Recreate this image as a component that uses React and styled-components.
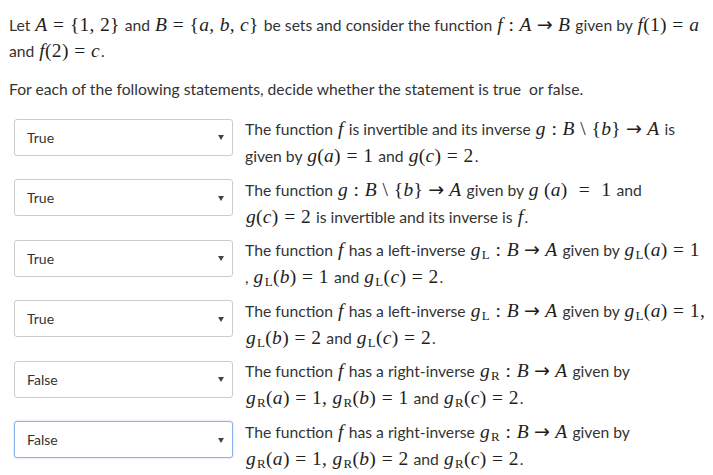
import React from 'react'
import styled, { createGlobalStyle } from 'styled-components'

const GlobalStyle = createGlobalStyle`
  body {
    margin: 0;
    background: #fff;
    color: #333;
    font-family: Lato, "Open Sans", sans-serif;
    font-size: 15.7px;
  }
`

const Page = styled.div`
  padding: 12px 6px 0 9px;
`

const Intro = styled.p`
  margin: 0;
  line-height: 26px;
`

const Lead = styled.p`
  margin: 15px 0 17px 0;
  line-height: 20px;
`

const List = styled.div`
  display: flex;
  flex-direction: column;
  gap: 6.5px;
  padding-left: 5px;
`

const Row = styled.div`
  display: grid;
  grid-template-columns: 219px 1fr;
  column-gap: 12px;
  align-items: start;
`

const Select = styled.div`
  box-sizing: border-box;
  height: 37px;
  margin-top: 2.5px;
  display: flex;
  align-items: center;
  justify-content: space-between;
  padding: 0 8px 0 12px;
  border: 1px solid ${({ $focused }) => ($focused ? '#8cb4ec' : '#ccc')};
  box-shadow: ${({ $focused }) => ($focused ? '0 0 2px rgba(102,150,233,0.5)' : 'none')};
  border-radius: 3px;
  background: #fff;
  font-size: 14px;
  color: #333;
`

const Caret = styled.span`
  width: 0;
  height: 0;
  border-left: 3px solid transparent;
  border-right: 3px solid transparent;
  border-top: 5px solid #444;
  margin-top: 1px;
`

const Statement = styled.div`
  line-height: 27px;
  white-space: nowrap;
`

const M = styled.span`
  font-family: "Liberation Serif", "DejaVu Serif", serif;
  font-size: 19.5px;
  line-height: 1;
  letter-spacing: 0.3px;
  white-space: nowrap;
  margin: 0 1px;
  color: #1e1e1e;
`

const V = styled.i`
  font-style: italic;
`

const Op = styled.span`
  margin: 0 ${({ $w }) => $w || 5.5}px;
`

const Arrow = styled.span`
  font-family: "DejaVu Sans", sans-serif;
  font-size: 19px;
  line-height: 0;
  margin: 0 5px;
`

const Sub = styled.span`
  font-size: 13px;
  line-height: 0;
  vertical-align: -3px;
  font-style: normal;
  margin-left: 1px;
`

const gL = <><V>g</V><Sub>L</Sub></>
const gR = <><V>g</V><Sub>R</Sub></>
const setMinusB = <><V>B</V><Op>\</Op>{'{'}<V>b</V>{'}'}</>
const arrow = <Arrow>→</Arrow>
const eq = <Op>=</Op>

const rows = [
  {
    value: 'True',
    body: (
      <>
        The function <M><V>f</V></M> is invertible and its inverse{' '}
        <M><V>g</V><Op>:</Op>{setMinusB}{arrow}<V>A</V></M> is
        <br />given by <M><V>g</V>(<V>a</V>){eq}1</M> and <M><V>g</V>(<V>c</V>){eq}2</M>.
      </>
    ),
  },
  {
    value: 'True',
    body: (
      <>
        The function <M><V>g</V><Op>:</Op>{setMinusB}{arrow}<V>A</V></M> given by{' '}
        <M><V>g</V> (<V>a</V>) <Op $w={6}>=</Op> 1</M> and
        <br /><M><V>g</V>(<V>c</V>){eq}2</M> is invertible and its inverse is <M><V>f</V></M>.
      </>
    ),
  },
  {
    value: 'True',
    body: (
      <>
        The function <M><V>f</V></M> has a left-inverse{' '}
        <M>{gL}<Op>:</Op><V>B</V>{arrow}<V>A</V></M> given by <M>{gL}(<V>a</V>){eq}1</M>
        <br />, <M>{gL}(<V>b</V>){eq}1</M> and <M>{gL}(<V>c</V>){eq}2</M>.
      </>
    ),
  },
  {
    value: 'True',
    body: (
      <>
        The function <M><V>f</V></M> has a left-inverse{' '}
        <M>{gL}<Op>:</Op><V>B</V>{arrow}<V>A</V></M> given by <M>{gL}(<V>a</V>){eq}1,</M>
        <br /><M>{gL}(<V>b</V>){eq}2</M> and <M>{gL}(<V>c</V>){eq}2</M>.
      </>
    ),
  },
  {
    value: 'False',
    body: (
      <>
        The function <M><V>f</V></M> has a right-inverse{' '}
        <M>{gR}<Op>:</Op><V>B</V>{arrow}<V>A</V></M> given by
        <br /><M>{gR}(<V>a</V>){eq}1, {gR}(<V>b</V>){eq}1</M> and <M>{gR}(<V>c</V>){eq}2</M>.
      </>
    ),
  },
  {
    value: 'False',
    focused: true,
    body: (
      <>
        The function <M><V>f</V></M> has a right-inverse{' '}
        <M>{gR}<Op>:</Op><V>B</V>{arrow}<V>A</V></M> given by
        <br /><M>{gR}(<V>a</V>){eq}1, {gR}(<V>b</V>){eq}2</M> and <M>{gR}(<V>c</V>){eq}2</M>.
      </>
    ),
  },
]

export default function App() {
  return (
    <Page>
      <GlobalStyle />
      <Intro>
        Let <M><V>A</V>{eq}{'{'}1, 2{'}'}</M> and <M><V>B</V>{eq}{'{'}<V>a</V>, <V>b</V>, <V>c</V>{'}'}</M> be
        sets and consider the function <M><V>f</V><Op>:</Op><V>A</V>{arrow}<V>B</V></M> given by{' '}
        <M><V>f</V>(1){eq}<V>a</V></M>
        <br />and <M><V>f</V>(2){eq}<V>c</V></M>.
      </Intro>
      <Lead>For each of the following statements, decide whether the statement is true&nbsp; or false.</Lead>
      <List>
        {rows.map((r, i) => (
          <Row key={i}>
            <Select $focused={r.focused}>
              <span>{r.value}</span>
              <Caret />
            </Select>
            <Statement>{r.body}</Statement>
          </Row>
        ))}
      </List>
    </Page>
  )
}
